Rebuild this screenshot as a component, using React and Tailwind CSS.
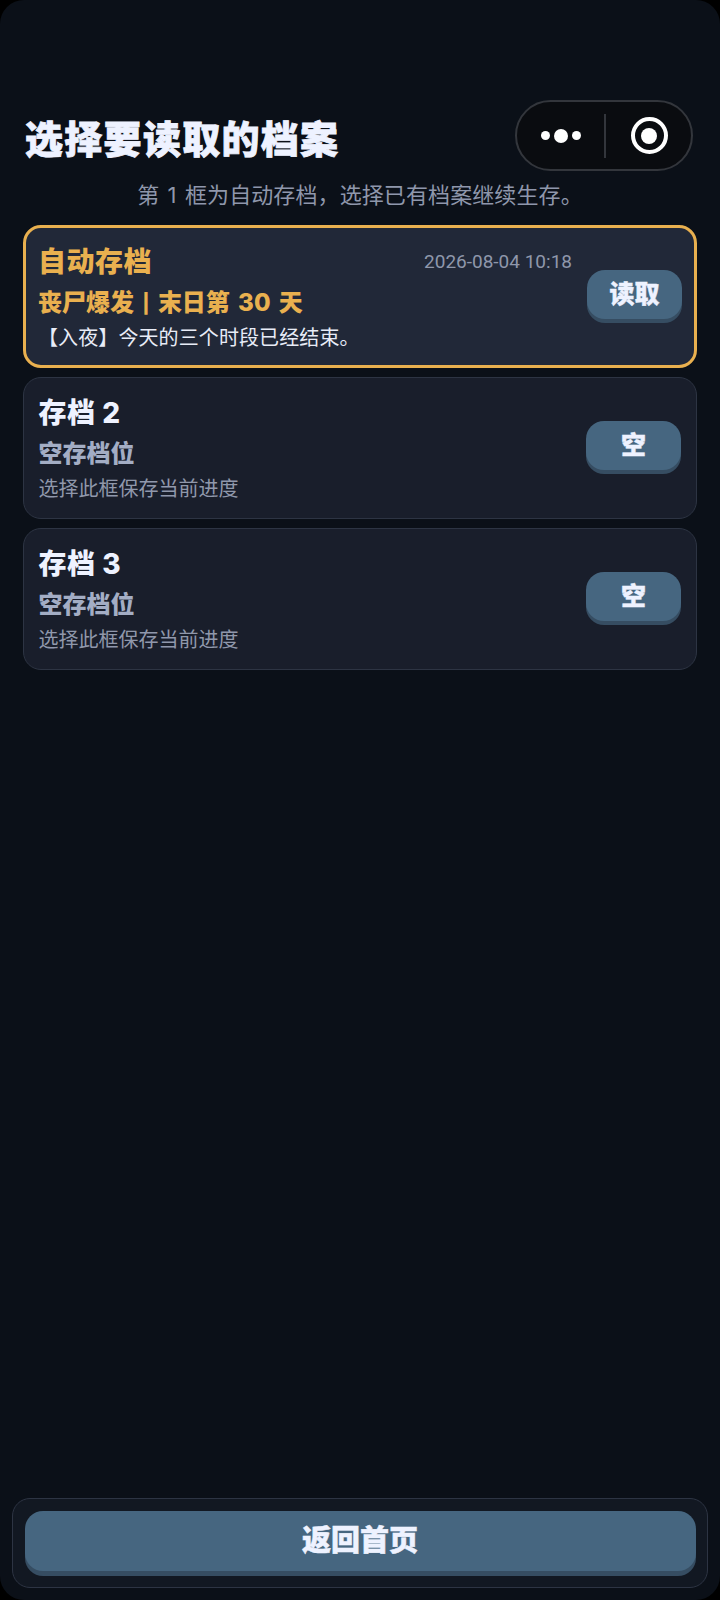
function Slot({ active, title, time, sub, desc, btn }) {
  return (
    <div className={`flex items-center justify-between rounded-[18px] ${active ? "h-[143px] border-[3px] border-[#e9b04f] bg-[#212838] pl-[12px] pr-[12px]" : "h-[142px] border-[1.5px] border-[#2d3443] bg-[#191e2b] pl-[14.5px] pr-[15px]"}`}>
      <div className={`min-w-0 flex-1 ${active ? "mt-[2px]" : "mt-[1px]"}`}>
        <div className="flex items-center justify-between pr-[15px]">
          <span className={`text-[28px] font-extrabold leading-[38px] tracking-[0.5px] ${active ? "text-[#e9b04f]" : "text-[#eef2ff]"}`}>{title}</span>
          {time && <span className="text-[19px] leading-[38px] text-[#8f97ab]" style={{ fontFamily: '"Roboto",sans-serif' }}>{time}</span>}
        </div>
        <div className={`mt-[4px] text-[24px] font-extrabold leading-[36px] [word-spacing:3px] ${active ? "text-[#e9b04f]" : "text-[#a3adc4]"}`}>{sub}</div>
        <div className={`text-[20px] leading-[30px] ${active ? "text-[#e8ecf7] tracking-[0.1px]" : "mt-[2px] text-[#9098ab]"}`}>{desc}</div>
      </div>
      <div className="mb-[5px] flex h-[49px] w-[95px] shrink-0 items-center justify-center rounded-[18px] bg-[#466680] text-[25px] font-extrabold leading-none text-[#eef2ff] shadow-[0_4px_0_#364d62] [-webkit-text-stroke:0.4px_#eef2ff]">{btn}</div>
    </div>
  );
}
export default function App() {
  return (
    <div className="relative flex h-[1600px] w-[720px] flex-col overflow-hidden bg-black text-[#eef2ff]" style={{ fontFamily: '"Inter","Noto Sans CJK SC",sans-serif' }}>
      <div className="flex h-full flex-col rounded-[24px] bg-[#0b1018] px-[23px]">
        <h1 className="mt-[114px] pl-[2px] text-[38px] font-black leading-[50px] tracking-[1.3px] text-[#eef2ff] [-webkit-text-stroke:0.8px_#eef2ff]">选择要读取的档案</h1>
        <p className="mt-[15px] text-center text-[22px] leading-[32px] tracking-[0.1px] text-[#8f97ab] [word-spacing:2px]">第 1 框为自动存档，选择已有档案继续生存。</p>
        <div className="mt-[14px] flex flex-col gap-[9px]">
          <Slot active title="自动存档" time="2026-08-04 10:18" sub={<>丧尸爆发 <span className="relative top-[-1px] text-[19px]">|</span> 末日第 30 天</>} desc="【入夜】今天的三个时段已经结束。" btn="读取" />
          <Slot title="存档 2" sub="空存档位" desc="选择此框保存当前进度" btn="空" />
          <Slot title="存档 3" sub="空存档位" desc="选择此框保存当前进度" btn="空" />
        </div>
        <div className="mt-auto mb-[12px] -mx-[11px] rounded-[18px] border-[1.5px] border-[#2d3443] bg-[#121822] px-[11.5px] pt-[11.5px] pb-[11.5px]">
          <div className="mb-[5px] flex h-[60px] items-center justify-center rounded-[18px] bg-[#466680] text-[29px] font-extrabold leading-none text-[#eef2ff] shadow-[0_5px_0_#364d62] [-webkit-text-stroke:0.5px_#eef2ff]">返回首页</div>
        </div>
      </div>
      <div className="absolute left-[515px] top-[100px] flex h-[71px] w-[178px] items-center rounded-full border-2 border-[#33363c] bg-[#0a0c10]">
        <div className="flex w-[87px] items-center justify-center gap-[4px]">
          <span className="h-[9px] w-[9px] rounded-full bg-white" />
          <span className="h-[14px] w-[14px] rounded-full bg-white" />
          <span className="h-[9px] w-[9px] rounded-full bg-white" />
        </div>
        <div className="h-[44px] w-[2px] bg-[#33363c]" />
        <div className="flex flex-1 items-center justify-center pl-[1px]">
          <div className="flex h-[37px] w-[37px] items-center justify-center rounded-full border-[4px] border-white">
            <span className="h-[16px] w-[16px] rounded-full bg-white" />
          </div>
        </div>
      </div>
    </div>
  );
}
